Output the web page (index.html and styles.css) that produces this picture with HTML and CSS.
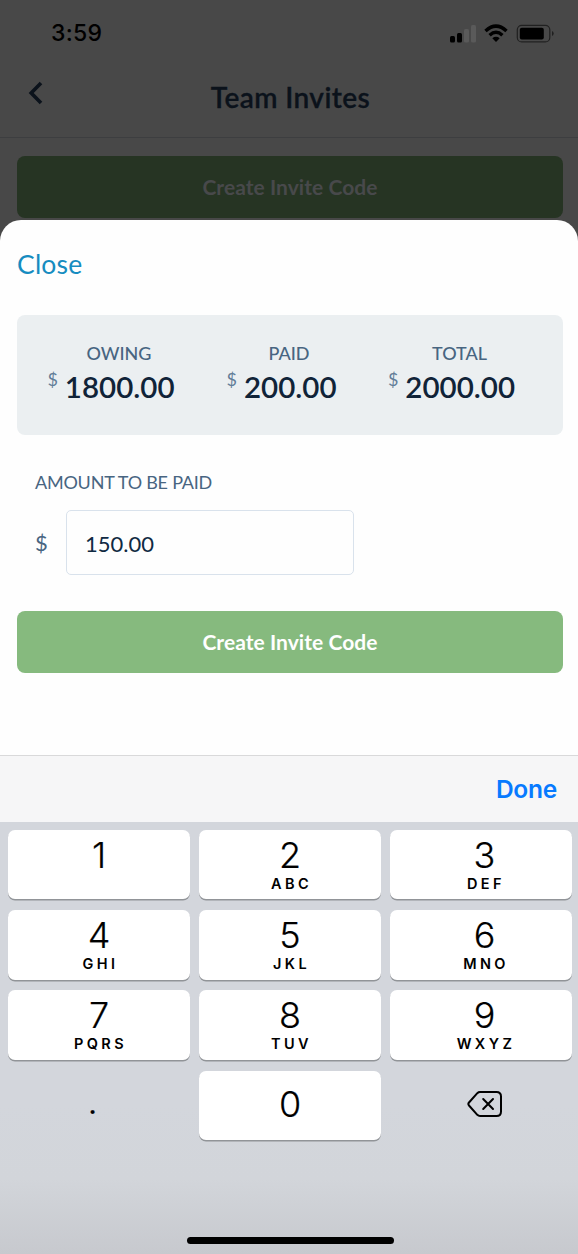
FILE: index.html
```html
<!DOCTYPE html>
<html lang="en">
<head>
<meta charset="utf-8">
<title>Team Invites</title>
<link rel="stylesheet" href="styles.css">
</head>
<body>
<main class="screen">
  <section class="backdrop">
    <div class="status">
      <span class="time">3:59</span>
      <svg class="status-icons" width="104" height="20" viewBox="0 0 104 20">
        <rect x="0" y="13" width="5" height="6.5" rx="1.5"/>
        <rect x="7" y="10" width="5" height="9.5" rx="1.5"/>
        <g class="faint"><rect x="14" y="6" width="5" height="13.5" rx="1.5"/><rect x="21" y="2" width="5" height="17.5" rx="1.5"/></g>
        <g class="wifi"><path d="M35.5 8Q46 -1.8 56.500 8"/><path d="M39.600 12.200Q46 6.300 52.400 12.200"/></g>
        <path d="M42.300 15.200Q46 12.300 49.700 15.200L46 19Z"/>
        <rect class="shell" x="67.300" y="2.300" width="32.500" height="16.600" rx="4.500"/>
        <rect x="69.800" y="4.800" width="24" height="11.700" rx="2"/>
        <path class="tip" d="M102 8v5q1.700-.8 1.700-2.500t-1.700-2.500z"/>
      </svg>
    </div>
    <header class="header">
      <svg class="back" width="16" height="24" viewBox="0 0 16 24"><path d="M13 2L3.200 12L13 22"/></svg>
      <h1 class="title">Team Invites</h1>
    </header>
    <div class="button button-dim">Create Invite Code</div>
  </section>

  <section class="sheet">
    <a class="close">Close</a>
    <div class="summary">
      <div class="stat stat-owing"><span class="label">OWING</span><span class="amount"><span class="currency">$</span>1800.00</span></div>
      <div class="stat stat-paid"><span class="label">PAID</span><span class="amount"><span class="currency">$</span>200.00</span></div>
      <div class="stat stat-total"><span class="label">TOTAL</span><span class="amount"><span class="currency">$</span>2000.00</span></div>
    </div>
    <div class="field-label">AMOUNT TO BE PAID</div>
    <div class="field">
      <span class="prefix">$</span>
      <div class="input">150.00</div>
    </div>
    <div class="button">Create Invite Code</div>
  </section>

  <section class="keyboard">
    <div class="toolbar"><span class="done">Done</span></div>
    <div class="keys">
      <div class="key"><span class="digit">1</span></div>
      <div class="key"><span class="digit">2</span><span class="letters">ABC</span></div>
      <div class="key key-right"><span class="digit">3</span><span class="letters">DEF</span></div>
      <div class="key"><span class="digit">4</span><span class="letters">GHI</span></div>
      <div class="key"><span class="digit">5</span><span class="letters">JKL</span></div>
      <div class="key key-right"><span class="digit">6</span><span class="letters">MNO</span></div>
      <div class="key"><span class="digit">7</span><span class="letters">PQRS</span></div>
      <div class="key"><span class="digit">8</span><span class="letters">TUV</span></div>
      <div class="key key-right"><span class="digit">9</span><span class="letters">WXYZ</span></div>
      <div class="key key-plain key-dot"><span class="digit">.</span></div>
      <div class="key key-zero"><span class="digit">0</span></div>
      <div class="key key-plain key-delete">
        <svg width="36" height="28" viewBox="0 0 36 28"><path d="M13 2H29.500Q34 2 34 6.500V21.500Q34 26 29.500 26H13Q11.500 26 10.300 24.800L2 15.500Q.7 14 2 12.500L10.300 3.200Q11.500 2 13 2Z"/><path d="M16.200 9L26 19M26 9L16.200 19"/></svg>
      </div>
    </div>
    <div class="home"></div>
  </section>
</main>
</body>
</html>
```
FILE: styles.css
```css
* { box-sizing: border-box; }
body { margin: 0; font-family: Lato, sans-serif; }
.screen { width: 578px; height: 1254px; display: flex; flex-direction: column; background: #484848; overflow: hidden; }

.backdrop { height: 220px; }
.status { height: 66px; padding: 0 24px 0 51px; display: flex; align-items: center; justify-content: space-between; }
.time { font: 500 23px/30px Inter, sans-serif; color: #000; letter-spacing: 0.3px; }
.status-icons { flex: none; }
.faint { fill: #5a5a5a; }
.wifi { fill: none; stroke: #000; stroke-width: 3.400; }
.shell { fill: none; stroke: #202020; stroke-width: 1.200; }
.tip { fill: #202020; }
.header { height: 72px; padding: 0 28px; display: grid; grid-template-columns: 16px 1fr 16px; align-items: center; border-bottom: 1px solid #3d3e40; }
.back { fill: none; stroke: #0b121b; stroke-width: 3.600; margin-top: -17px; }
.title { margin: -9px 0 0 3px; text-align: center; font-size: 28px; font-weight: 600; line-height: 36px; letter-spacing: 0.400px; color: #0b121b; -webkit-text-stroke: 0.300px #0b121b; }

.button { height: 62px; margin: 0 15px 0 17px; border-radius: 8px; background: #86ba7e; color: #fff; font-size: 21px; font-weight: 700; line-height: 61px; letter-spacing: 0.050px; text-align: center; }
.button-dim { margin-top: 17.500px; background: #263423; color: #48494b; }

.sheet { height: 535px; background: #fefefe; border-radius: 21px 21px 0 0; }
.close { display: block; padding: 27px 0 0 17px; height: 95px; font-size: 26.500px; line-height: 34px; letter-spacing: 0.200px; color: #168cc0; }
.summary { height: 120px; margin: 0 15px 0 17px; border-radius: 8px; background: #ebeff1; display: flex; }
.stat { display: flex; flex-direction: column; align-items: flex-end; padding-top: 27px; }
.stat-owing { width: 157.500px; }
.stat-paid { width: 162px; }
.stat-total { width: 178.500px; }
.label { width: 111px; text-align: center; font-size: 18px; font-weight: 500; line-height: 22px; color: #486581; }
.stat-paid .label { width: 95px; }
.amount { display: flex; align-items: flex-start; font-size: 29.500px; font-weight: 600; line-height: 36px; margin-top: 5px; color: #102338; }
.currency { font-size: 18px; font-weight: 400; line-height: 21px; margin-right: 7px; color: #627d98; }
.field-label { margin: 36px 0 0 35px; font-size: 18px; line-height: 22px; letter-spacing: -0.230px; color: #486581; }
.field { display: flex; align-items: center; margin: 17px 0 36px 35px; }
.prefix { width: 31px; font-size: 22px; color: #486581; }
.input { width: 288px; height: 65px; border: 1.500px solid #d9e2ec; border-radius: 5px; padding-left: 18px; font-size: 22px; line-height: 65px; color: #102a43; }

.keyboard { height: 499px; background: linear-gradient(#d3d6dc 70%, #d2d5da 85%, #c7c9ce); }
.toolbar { height: 67px; display: flex; align-items: center; justify-content: flex-end; padding-right: 21px; background: #f6f6f7; border-top: 1px solid #d9d9da; font-family: Inter, sans-serif; }
.done { font-size: 24.500px; font-weight: 600; letter-spacing: -0.250px; color: #077aff; }
.keys { display: grid; grid-template-columns: repeat(3, 182px); grid-template-rows: 69px 70px 70px 69px; gap: 10.500px 9px; padding: 8px 0 0 8px; }
.key { background: #fff; border-radius: 7px; box-shadow: 0 1.500px 0 #919498; display: flex; flex-direction: column; align-items: center; color: #000; font-family: Inter, sans-serif; padding-top: 5px; }
.key-right { padding-left: 7px; }
.digit { font-size: 36px; font-weight: 300; line-height: 40px; -webkit-text-stroke: 0.200px #000; }
.letters { font-size: 14.500px; font-weight: 600; line-height: 18px; letter-spacing: 3.400px; padding-left: 3px; }
.key-plain { background: none; box-shadow: none; }
.key-zero { padding-top: 13px; }
.key-dot { padding: 10px 13px 0 0; }
.key-delete { padding: 19px 0 0 8px; }
.key-delete svg { fill: none; stroke: #000; stroke-width: 2; stroke-linecap: round; }
.home { width: 207px; height: 7px; margin: 97.500px 0 0 187px; border-radius: 4px; background: #000; }
```
